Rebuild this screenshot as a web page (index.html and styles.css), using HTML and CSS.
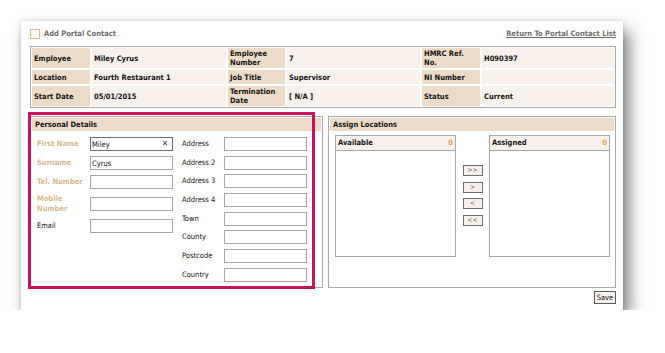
FILE: index.html
```html
<!DOCTYPE html>
<html lang="en">
<head>
    <meta charset="UTF-8">
    <meta name="viewport" content="width=device-width, initial-scale=1.0">
    <title>Add Portal Contact</title>
    <link rel="stylesheet" href="styles.css">
</head>
<body>
    <div class="card">
        <div class="topbar">
            <label class="add"><span class="check"></span>Add Portal Contact</label>
            <a class="back" href="#">Return To Portal Contact List</a>
        </div>

        <div class="info">
            <div class="lbl">Employee</div><div class="val">Miley Cyrus</div>
            <div class="lbl">Employee Number</div><div class="val">7</div>
            <div class="lbl">HMRC Ref. No.</div><div class="val">H090397</div>

            <div class="lbl">Location</div><div class="val">Fourth Restaurant 1</div>
            <div class="lbl">Job Title</div><div class="val">Supervisor</div>
            <div class="lbl">NI Number</div><div class="val"></div>

            <div class="lbl">Start Date</div><div class="val">05/01/2015</div>
            <div class="lbl">Termination Date</div><div class="val">[ N/A ]</div>
            <div class="lbl">Status</div><div class="val">Current</div>
        </div>

        <div class="panels">
            <section class="panel personal">
                <div class="panel-head">Personal Details</div>
                <div class="form">
                    <div class="col left">
                        <span class="req">First Name</span>
                        <div class="field focus"><input type="text" value="Miley"><span class="clear">✕</span></div>
                        <span class="req">Surname</span>
                        <div class="field"><input type="text" value="Cyrus"></div>
                        <span class="req">Tel. Number</span>
                        <div class="field"><input type="text"></div>
                        <span class="req">Mobile Number</span>
                        <div class="field"><input type="text"></div>
                        <span>Email</span>
                        <div class="field"><input type="text"></div>
                    </div>
                    <div class="col right">
                        <span>Address</span>
                        <div class="field"><input type="text"></div>
                        <span>Address 2</span>
                        <div class="field"><input type="text"></div>
                        <span>Address 3</span>
                        <div class="field"><input type="text"></div>
                        <span>Address 4</span>
                        <div class="field"><input type="text"></div>
                        <span>Town</span>
                        <div class="field"><input type="text"></div>
                        <span>County</span>
                        <div class="field"><input type="text"></div>
                        <span>Postcode</span>
                        <div class="field"><input type="text"></div>
                        <span>Country</span>
                        <div class="field"><input type="text"></div>
                    </div>
                </div>
                <div class="highlight"></div>
            </section>

            <section class="panel assign">
                <div class="panel-head">Assign Locations</div>
                <div class="lists">
                    <div class="list">
                        <div class="list-head"><span>Available</span><span class="count">0</span></div>
                    </div>
                    <div class="moves">
                        <button>&gt;&gt;</button>
                        <button>&gt;</button>
                        <button>&lt;</button>
                        <button>&lt;&lt;</button>
                    </div>
                    <div class="list">
                        <div class="list-head"><span>Assigned</span><span class="count">0</span></div>
                    </div>
                </div>
            </section>
        </div>

        <div class="actions">
            <button class="save">Save</button>
        </div>
    </div>
</body>
</html>
```

FILE: styles.css
```css
body {
  margin: 0;
  background-color: #ffffff;
  font-family: "DejaVu Sans Condensed", "DejaVu Sans", sans-serif;
  font-size: 7.5px;
  color: #141414;
}

.card {
  box-sizing: border-box;
  width: 602px;
  height: 289px;
  margin: 21px 0 0 21px;
  padding: 7px 7px 7px 9px;
  background-color: #ffffff;
  box-shadow: 6px 10px 16px rgba(0, 0, 0, 0.5), 0 0 5px rgba(0, 0, 0, 0.15);
}

/* Top bar */
.topbar {
  display: flex;
  justify-content: space-between;
  align-items: center;
  height: 11px;
}

.add {
  display: flex;
  align-items: center;
  gap: 4px;
  font-weight: bold;
  color: #6e6e6e;
}

.check {
  box-sizing: border-box;
  width: 10px;
  height: 10px;
  border: 1px solid #e2b888;
  background-color: #ffffff;
}

.back {
  font-weight: bold;
  color: #6e6e6e;
  text-decoration: underline;
}

/* Employee info grid */
.info {
  display: grid;
  grid-template-columns: 58px 134px 57px 133px 58px 1fr;
  grid-template-rows: 20px 14px 20px;
  gap: 2px;
  padding: 1px;
  margin-top: 7px;
  border: 1px solid #a9a9a9;
  font-weight: bold;
}

.info div {
  display: flex;
  align-items: center;
  padding: 0 2px;
  line-height: 9px;
}

.info .lbl {
  background-color: #ecdbc7;
}

.info .val {
  background-color: #f8f1eb;
}

/* Panels */
.panels {
  display: flex;
  gap: 5px;
  margin-top: 8px;
  height: 172px;
}

.panel {
  position: relative;
  box-sizing: border-box;
  border: 1px solid #aaaaaa;
  padding: 1px;
}

.personal {
  width: 293px;
}

.assign {
  flex: 1;
}

.panel-head {
  height: 13px;
  line-height: 13px;
  padding-left: 3px;
  background-color: #ecdcc9;
  font-weight: bold;
}

/* Personal details form */
.form {
  display: flex;
  align-items: flex-start;
  gap: 9px;
  padding: 6px 0 0 5px;
}

.col {
  display: grid;
  align-items: center;
  align-content: start;
  grid-auto-rows: minmax(14px, auto);
}

.col.left {
  grid-template-columns: 53px 83px;
  row-gap: 5px;
}

.col.right {
  grid-template-columns: 42px 83px;
  row-gap: 4.7px;
}

.col span {
  line-height: 10px;
}

.col .req {
  color: #d8b890;
  font-weight: bold;
}

.field {
  box-sizing: border-box;
  display: flex;
  align-items: center;
  height: 14px;
  border: 1px solid #a6a6a6;
  background-color: #ffffff;
}

.field.focus {
  border-color: #707070;
}

.field input {
  flex: 1;
  min-width: 0;
  border: none;
  outline: none;
  padding: 0 1px;
  background: transparent;
  font-family: inherit;
  font-size: 7.5px;
  color: #141414;
}

.clear {
  padding-right: 4px;
  font-size: 8px;
  font-weight: bold;
  color: #333333;
}

/* Annotation box over the personal details panel */
.highlight {
  position: absolute;
  left: -3px;
  top: -5px;
  width: 287px;
  height: 177px;
  box-sizing: border-box;
  border: 3px solid #c8125a;
  pointer-events: none;
}

/* Assign locations */
.lists {
  display: flex;
  padding: 4px 4px 0 5px;
}

.list {
  box-sizing: border-box;
  width: 121px;
  height: 122px;
  border: 1px solid #a6a6a6;
}

.list-head {
  display: flex;
  justify-content: space-between;
  height: 14px;
  line-height: 14px;
  padding: 0 2px 0 2px;
  background-color: #f8f1eb;
  border-bottom: 1px solid #a6a6a6;
  font-weight: bold;
}

.count {
  color: #e8a050;
}

.moves {
  flex: 1;
  display: flex;
  flex-direction: column;
  align-items: center;
  gap: 5.7px;
  padding-top: 30px;
}

.moves button {
  box-sizing: border-box;
  width: 20px;
  height: 11px;
  padding: 0;
  border: 1px solid #6f6f6f;
  background-color: #f7efe9;
  font-family: inherit;
  font-size: 6.5px;
  line-height: 9px;
  color: #555555;
}

/* Save */
.actions {
  display: flex;
  justify-content: flex-end;
  margin-top: 3px;
}

.save {
  box-sizing: border-box;
  width: 22px;
  height: 13px;
  padding: 0;
  border: 1px solid #5a5a5a;
  background-color: #f8f3ee;
  font-family: inherit;
  font-size: 7.5px;
  color: #141414;
}
```
